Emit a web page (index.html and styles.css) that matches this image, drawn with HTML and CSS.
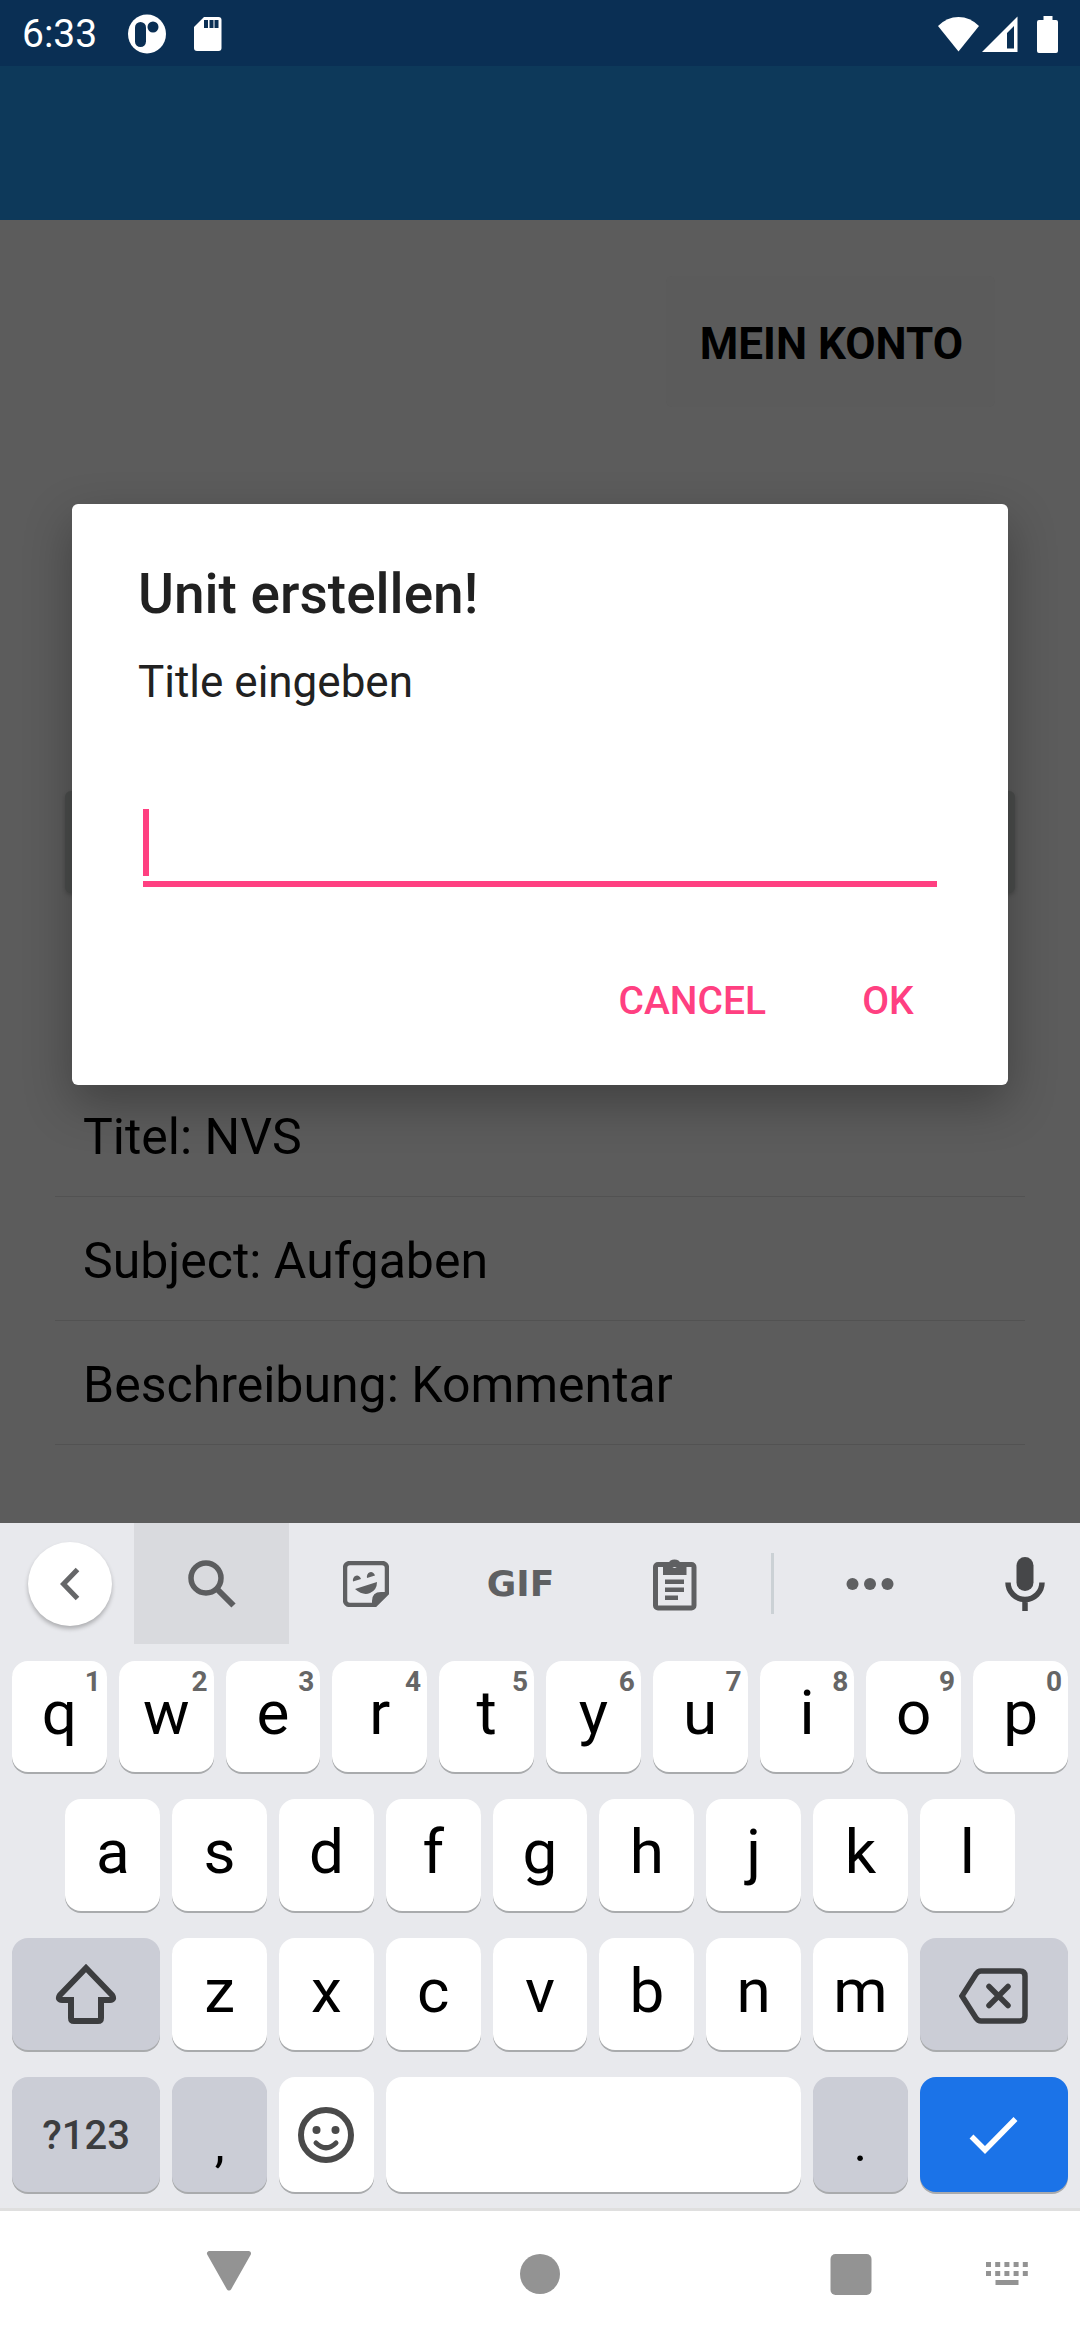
FILE: index.html
```html
<!DOCTYPE html>
<html lang="de">
<head>
<meta charset="utf-8">
<meta name="viewport" content="width=device-width, initial-scale=1">
<title>Unit erstellen</title>
<link rel="stylesheet" href="styles.css">
</head>
<body>
<div class="screen">
  <div class="status-bar">
    <span class="clock">6:33</span>
    <svg class="status-disc" width="40" height="40" viewBox="0 0 40 40" aria-hidden="true">
      <ellipse cx="20" cy="20" rx="19" ry="19.500" fill="#fff"/>
      <rect x="8" y="8" width="11" height="25" rx="5.500" fill="#0a2f54"/>
      <circle cx="26" cy="13" r="5.500" fill="#0a2f54"/>
    </svg>
    <svg width="30" height="36" viewBox="0 0 30 36" aria-hidden="true">
      <path fill="#fff" d="M11 1h14.500a3 3 0 0 1 3 3v28a3 3 0 0 1-3 3H4a3 3 0 0 1-3-3V11z"/>
      <path fill="#0a2f54" d="M11 4h4v8h-4zM16.500 4h4v8h-4zM21.500 4h4v8h-4z"/>
    </svg>
    <span class="status-right">
      <svg width="41" height="36" viewBox="0 0 41 36" aria-hidden="true"><path fill="#fff" d="M0 10Q9 1 20.500 1T41 10L20.500 35.500z"/></svg>
      <svg width="36" height="36" viewBox="0 0 36 36" aria-hidden="true"><path fill="#fff" fill-rule="evenodd" d="M35.500 .5V36H0zM32 10l-7 7v15.500h7z"/></svg>
      <svg class="battery" width="21" height="37" viewBox="0 0 21 37" aria-hidden="true"><path fill="#fff" d="M6.500 0h9v4H19a2 2 0 0 1 2 2v29a2 2 0 0 1-2 2H2a2 2 0 0 1-2-2V6a2 2 0 0 1 2-2h4.500z"/></svg>
    </span>
  </div>

  <div class="app">
    <header class="app-bar"></header>
    <main class="content">
      <button class="account" type="button">MEIN KONTO</button>
      <button class="create" type="button" aria-label="Unit erstellen"></button>
      <ul class="details">
        <li>Titel: NVS</li>
        <li>Subject: Aufgaben</li>
        <li>Beschreibung: Kommentar</li>
      </ul>
    </main>
    <div class="overlay">
      <form class="dialog" role="dialog" aria-labelledby="dialog-title">
        <h1 id="dialog-title">Unit erstellen!</h1>
        <label for="unit-title">Title eingeben</label>
        <div class="field">
          <span class="cursor"></span>
          <input id="unit-title" type="text" autocomplete="off">
        </div>
        <div class="actions">
          <button type="button">CANCEL</button>
          <button type="button">OK</button>
        </div>
      </form>
    </div>
  </div>

  <section class="keyboard" aria-label="Tastatur">
    <div class="tools">
      <button class="tool back" type="button" aria-label="Zurück">
        <span class="disc"><svg width="20" height="34" viewBox="0 0 20 34"><path d="M17.500 2.500L3.500 17l14 14.500" fill="none" stroke="#666769" stroke-width="5"/></svg></span>
      </button>
      <button class="tool active" type="button" aria-label="Suchen">
        <svg width="48" height="48" viewBox="0 0 48 48" fill="none" stroke="#5c5d5f"><circle cx="18" cy="18" r="15" stroke-width="5.500"/><path d="M30 30l15.500 15.500" stroke-width="6"/></svg>
      </button>
      <button class="tool" type="button" aria-label="Sticker">
        <svg width="46" height="46" viewBox="0 0 46 46"><path d="M7 2h32a5 5 0 0 1 5 5v25L32 44H7a5 5 0 0 1-5-5V7a5 5 0 0 1 5-5z" fill="none" stroke="#5f6062" stroke-width="4.500"/><path fill="#5f6062" d="M29 45v-5q0-9 9-9h7v1L32 45zM10 20.500a4 4.500 0 0 1 8-2.500zM24 17a4 4.500 0 0 1 8-2.500zM12 28l22-7q0 8-7 11t-15-4z"/></svg>
      </button>
      <button class="tool gif" type="button">GIF</button>
      <button class="tool" type="button" aria-label="Zwischenablage">
        <svg width="44" height="54" viewBox="0 0 44 54"><rect x="2.500" y="7.500" width="38.500" height="43.500" rx="2.500" fill="none" stroke="#5f6062" stroke-width="5"/><path fill="#5f6062" fill-rule="evenodd" d="M10 7h5a7 7 0 0 1 13 0h5.500v11H10zM21.500 5a3 3 0 1 0 .1 0zM12 22.500h19V27H12zM12 30.500h19V35H12zM12 38.500h13V43H12z"/></svg>
      </button>
      <span class="divider"></span>
      <button class="tool" type="button" aria-label="Mehr">
        <svg width="48" height="14" viewBox="0 0 48 14" fill="#5f6062"><circle cx="6.500" cy="7" r="6"/><circle cx="24" cy="7" r="6"/><circle cx="41.500" cy="7" r="6"/></svg>
      </button>
      <button class="tool mic" type="button" aria-label="Spracheingabe">
        <svg width="40" height="54" viewBox="0 0 40 54"><rect x="11.500" y="0" width="17" height="34" rx="8.500" fill="#464749"/><path d="M3 25.500a17 17 0 0 0 34 0M20 42v12" fill="none" stroke="#464749" stroke-width="5.500"/></svg>
      </button>
    </div>

    <div class="keys">
      <button class="key" type="button">q<sup>1</sup></button>
      <button class="key" type="button">w<sup>2</sup></button>
      <button class="key" type="button">e<sup>3</sup></button>
      <button class="key" type="button">r<sup>4</sup></button>
      <button class="key" type="button">t<sup>5</sup></button>
      <button class="key" type="button">y<sup>6</sup></button>
      <button class="key" type="button">u<sup>7</sup></button>
      <button class="key" type="button">i<sup>8</sup></button>
      <button class="key" type="button">o<sup>9</sup></button>
      <button class="key" type="button">p<sup>0</sup></button>

      <button class="key indent" type="button">a</button>
      <button class="key" type="button">s</button>
      <button class="key" type="button">d</button>
      <button class="key" type="button">f</button>
      <button class="key" type="button">g</button>
      <button class="key" type="button">h</button>
      <button class="key" type="button">j</button>
      <button class="key" type="button">k</button>
      <button class="key" type="button">l</button>

      <button class="key wide grey picture" type="button" aria-label="Umschalten">
        <svg width="62" height="62" viewBox="0 0 62 62"><path d="M31 5L5 32q-3 5 2 5h9v18q0 3 3 3h24q3 0 3-3V37h9q5 0 2-5z" fill="none" stroke="#3c3d3f" stroke-width="6"/></svg>
      </button>
      <button class="key" type="button">z</button>
      <button class="key" type="button">x</button>
      <button class="key" type="button">c</button>
      <button class="key" type="button">v</button>
      <button class="key" type="button">b</button>
      <button class="key" type="button">n</button>
      <button class="key" type="button">m</button>
      <button class="key wide grey picture" type="button" aria-label="Löschen">
        <svg width="70" height="60" viewBox="0 -4 70 60" fill="none" stroke="#3c3d3f"><path d="M3 28L17 6q2-3 5-3h39q5 0 5 5v40q0 5-5 5H22q-3 0-5-3z" stroke-width="5.500"/><path d="M30 18.500l19 19M49 18.500l-19 19" stroke-width="5.500" stroke-linecap="round"/></svg>
      </button>

      <button class="key wide grey symbols" type="button">?123</button>
      <button class="key grey punct" type="button">,</button>
      <button class="key picture" type="button" aria-label="Emoji">
        <svg width="56" height="56" viewBox="0 0 56 56" fill="none" stroke="#4a4a4a"><circle cx="28" cy="28" r="25" stroke-width="6"/><path d="M18 36q10 9.500 20 0" stroke-width="5" stroke-linecap="round"/><circle cx="18.500" cy="23" r="4" fill="#4a4a4a" stroke="none"/><circle cx="37.500" cy="23" r="4" fill="#4a4a4a" stroke="none"/></svg>
      </button>
      <button class="key space" type="button" aria-label="Leerzeichen"></button>
      <button class="key grey punct" type="button">.</button>
      <button class="key wide enter picture" type="button" aria-label="Fertig">
        <svg width="50" height="38" viewBox="0 0 50 38"><path d="M2.500 20.500L16 34 46.500 3" fill="none" stroke="#fff" stroke-width="5.500"/></svg>
      </button>
    </div>
  </section>

  <nav class="nav-bar" aria-label="System">
    <div class="nav-main">
      <button type="button" aria-label="Zurück"><svg width="46" height="46" viewBox="0 0 46 46"><path d="M3.500 2.500h39L23 37z" fill="#939393" stroke="#939393" stroke-width="5" stroke-linejoin="round"/></svg></button>
      <button type="button" aria-label="Startseite"><svg width="46" height="46" viewBox="0 0 46 46"><circle cx="23" cy="23" r="20" fill="#939393"/></svg></button>
      <button type="button" aria-label="Übersicht"><svg width="46" height="46" viewBox="0 0 46 46"><rect x="2.500" y="3" width="41" height="41" rx="5" fill="#939393"/></svg></button>
    </div>
    <button class="nav-ime" type="button" aria-label="Tastatur wechseln"><svg width="42" height="24" viewBox="0 0 42 24" fill="none" stroke="#939393" stroke-width="5"><path d="M0 2.500h42M0 11.500h42" stroke-dasharray="5 4.200"/><path d="M9.500 20.500h23"/></svg></button>
  </nav>
</div>
</body>
</html>
```
FILE: styles.css
```css
* {
  box-sizing: border-box;
}

body {
  margin: 0;
  font-family: Roboto, "Noto Sans", sans-serif;
}

button {
  margin: 0;
  padding: 0;
  border: 0;
  background: none;
  color: inherit;
  font: inherit;
}

svg {
  display: block;
}

.screen {
  display: flex;
  flex-direction: column;
  min-height: 100vh;
}

/* Status bar */

.status-bar {
  display: flex;
  align-items: center;
  height: 66px;
  padding: 2px 22px 0;
  background: #0a2f54;
  color: #fff;
  font-size: 39px;
}

.status-disc {
  margin: 0 26px 0 30px;
}

.status-right {
  display: flex;
  gap: 3px;
  margin-left: auto;
}

.battery {
  margin-left: 16px;
}

/* Dimmed activity */

.app {
  position: relative;
  display: flex;
  flex: 1;
  flex-direction: column;
  background: #5c5c5c;
  color: #000;
}

.app-bar {
  height: 154px;
  background: #0d395a;
}

.content {
  display: flex;
  flex-direction: column;
}

.account {
  align-self: flex-end;
  height: 131px;
  margin: 56px 85px 0 0;
  padding: 5px 32px 0 34px;
  border-radius: 6px;
  background: #5b5b5b;
  font-size: 44px;
  font-weight: 700;
}

.create {
  height: 102px;
  margin: 384px 65px 0;
  border-radius: 6px;
  background: #4b4d4c;
  box-shadow: 0 2px 4px rgba(0, 0, 0, 0.2);
}

.details {
  margin: 180px 55px 0;
  padding: 0;
  list-style: none;
  font-size: 50px;
}

.details li {
  height: 124px;
  padding: 4px 28px 0;
  border-bottom: 1px solid #525252;
  line-height: 120px;
}

/* Dialog */

.overlay {
  position: absolute;
  inset: 0;
  display: flex;
  align-items: center;
  padding: 0 72px;
}

.dialog {
  flex: 1;
  padding: 56px 66px 16px;
  border-radius: 6px;
  background: #fff;
  color: #212121;
  box-shadow: 0 18px 48px rgba(0, 0, 0, 0.3);
}

.dialog h1 {
  margin: 0;
  font-size: 55px;
  font-weight: 500;
  line-height: 68px;
}

.dialog label {
  display: block;
  margin-top: 24px;
  font-size: 44px;
  line-height: 60px;
}

.field {
  display: flex;
  height: 78px;
  margin: 97px 5px 0;
  padding-bottom: 5px;
  border-bottom: 6px solid #ff4081;
}

.cursor {
  width: 6px;
  background: #ff4081;
}

.field input {
  flex: 1;
  min-width: 0;
  padding: 0;
  border: 0;
  outline: 0;
  background: none;
  color: #212121;
  font: 50px Roboto, sans-serif;
}

.actions {
  display: flex;
  justify-content: flex-end;
  gap: 20px;
  margin: 48px -12px 2px 0;
}

.actions button {
  min-width: 132px;
  height: 132px;
  padding: 0 36px;
  color: #ff4081;
  font-size: 39px;
  font-weight: 500;
}

/* Keyboard */

.keyboard {
  border-bottom: 3px solid #dfdfdf;
  background: #e8e9ed;
}

.tools {
  display: grid;
  grid-template-columns: 134fr 155fr 154fr 155fr 154fr 40fr 155fr 133fr;
  height: 121px;
}

.tool {
  display: flex;
  align-items: center;
  justify-content: center;
}

.tool.active {
  background: #d9dade;
}

.tool.back {
  padding-left: 6px;
}

.tool.mic {
  padding-left: 22px;
}

.tool.gif {
  color: #5f6062;
  font-family: "DejaVu Sans", sans-serif;
  font-size: 36px;
  font-weight: 700;
}

.disc {
  display: flex;
  align-items: center;
  justify-content: center;
  width: 84px;
  height: 84px;
  border-radius: 50%;
  background: #fff;
  box-shadow: 0 3px 4px rgba(0, 0, 0, 0.25);
}

.divider {
  width: 3px;
  height: 61px;
  margin: auto;
  background: #cbd1d5;
}

.keys {
  display: grid;
  grid-template-columns: repeat(20, minmax(0, 1fr));
  grid-template-rows: 111px 112px 112px 115px;
  gap: 27px 12px;
  padding: 17px 12px 16px;
}

.key {
  position: relative;
  display: flex;
  grid-column: span 2;
  align-items: center;
  justify-content: center;
  padding-bottom: 8px;
  border-radius: 16px;
  background: #fff;
  box-shadow: 0 2px 0 #a9abad;
  color: #000;
  font-size: 62px;
}

.key.indent {
  grid-column: 2 / span 2;
}

.key.wide {
  grid-column: span 3;
}

.key.space {
  grid-column: span 8;
}

.key.picture {
  padding: 0;
}

.key.grey {
  background: #cbcdd6;
}

.key.enter {
  background: #1b73e8;
}

.key.symbols {
  padding: 2px 0 0;
  color: #3c3d3f;
  font-size: 40px;
  font-weight: 500;
}

.key.punct {
  padding: 18px 0 0;
  font-size: 50px;
}

.key sup {
  position: absolute;
  top: 6px;
  right: 6px;
  color: #666;
  font-size: 28px;
  font-weight: 700;
  line-height: 30px;
}

/* Navigation bar */

.nav-bar {
  display: grid;
  grid-template-columns: 1fr 65% 1fr;
  align-items: center;
  height: 129px;
  padding-bottom: 3px;
  background: #fff;
}

.nav-main {
  display: flex;
  grid-column: 2;
  justify-content: space-between;
}

.nav-bar button {
  display: flex;
  align-items: center;
  justify-content: center;
  width: 80px;
  height: 80px;
}

.nav-ime {
  justify-self: center;
  margin-left: 43px;
}
```
